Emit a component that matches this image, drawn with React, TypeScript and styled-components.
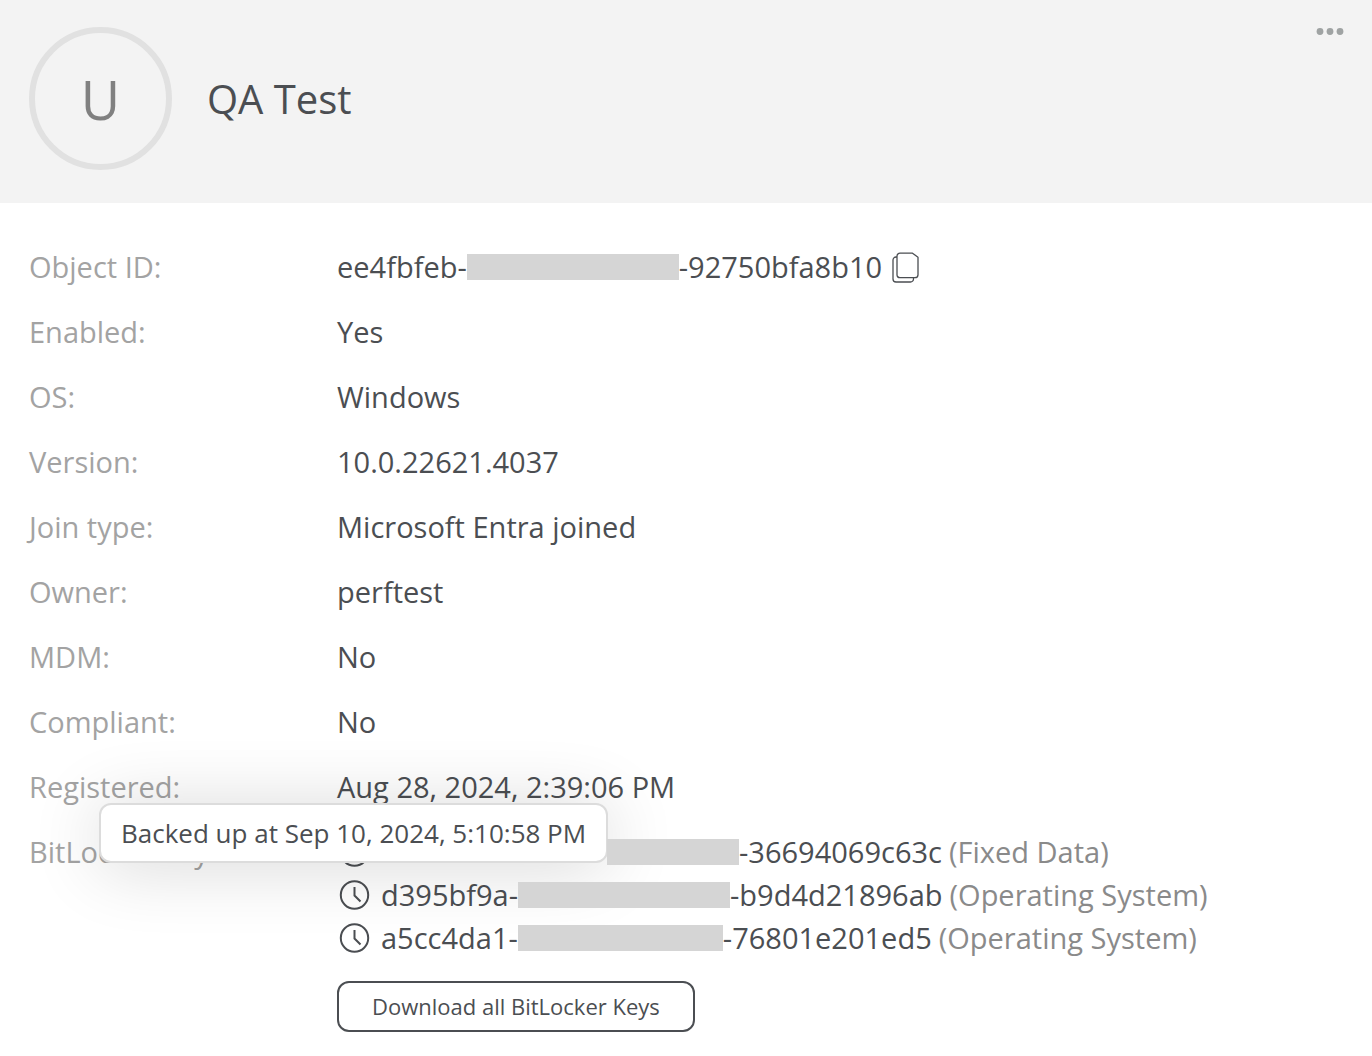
import React from "react";
import styled, { createGlobalStyle } from "styled-components";

const ink = "#4b4e52";
const muted = "#a3a3a3";

const GlobalStyle = createGlobalStyle`
  *, *::before, *::after { box-sizing: border-box; }
  body {
    margin: 0;
    background: #fff;
    color: ${ink};
    font-family: "Open Sans", "Noto Sans", sans-serif;
    font-size: 29px;
    line-height: 38px;
  }
`;

const Header = styled.header`
  display: flex;
  align-items: flex-start;
  gap: 35px;
  padding: 27px 24px 33px 29px;
  background: #f3f3f3;
`;

const Avatar = styled.div`
  display: flex;
  flex: none;
  align-items: center;
  justify-content: center;
  width: 143px;
  height: 143px;
  border: 6px solid #e1e1e1;
  border-radius: 50%;
  color: #808080;
  font-size: 54px;
  line-height: 74px;
`;

const Title = styled.h1`
  flex: 1;
  align-self: center;
  margin: 0;
  font-size: 40px;
  font-weight: 400;
  line-height: 53px;
`;

const IconButton = styled.button`
  display: inline-flex;
  flex: none;
  margin: 0;
  padding: 0;
  border: 0;
  background: none;
  color: inherit;
  cursor: pointer;
`;

const MenuButton = styled(IconButton)`
  color: #9fa3a3;
`;

const Details = styled.dl`
  display: grid;
  grid-template-columns: 308px minmax(0, 1fr);
  row-gap: 27px;
  margin: 0;
  padding: 45px 29px 24px;
`;

const Label = styled.dt`
  color: ${muted};
`;

const Value = styled.dd`
  display: flex;
  align-items: center;
  margin: 0;
  white-space: nowrap;
`;

const Redacted = styled.span<{ $width: number }>`
  position: relative;
  z-index: 2;
  flex: none;
  width: ${(p) => p.$width}px;
  height: 26px;
  background: #d5d5d5;
`;

const CopyButton = styled(IconButton)`
  margin-left: 9px;
`;

const KeyCell = styled.dd`
  position: relative;
  margin: 0;
`;

const KeyList = styled.ul`
  display: flex;
  flex-direction: column;
  gap: 5px;
  margin: 0;
  padding: 0;
  list-style: none;
`;

const KeyRow = styled.li`
  display: flex;
  align-items: center;
  white-space: nowrap;
`;

const KeyPrefix = styled.span<{ $width?: number }>`
  margin-left: 9px;
  width: ${(p) => (p.$width ? `${p.$width}px` : "auto")};
`;

const Volume = styled.span`
  margin-left: 7px;
  color: #8a8a8a;
`;

const Tooltip = styled.div`
  position: absolute;
  z-index: 1;
  top: -30px;
  left: -238px;
  padding: 9px 20px;
  border: 2px solid #dcdcdc;
  border-radius: 12px;
  background: #fff;
  box-shadow: 0 4px 70px rgba(0, 0, 0, 0.16);
  font-size: 26px;
  line-height: 38px;
  white-space: nowrap;
`;

const DownloadButton = styled.button`
  margin: 24px 0 0;
  padding: 8px 33px;
  border: 2px solid ${ink};
  border-radius: 12px;
  background: #fff;
  color: ${ink};
  font: inherit;
  font-size: 22px;
  line-height: 31px;
  cursor: pointer;
`;

const MoreIcon = () => (
  <svg width="36" height="10" viewBox="0 0 36 10" fill="currentColor" aria-hidden="true">
    <circle cx="8" cy="4.5" r="3.4" />
    <circle cx="18" cy="4.5" r="3.4" />
    <circle cx="28" cy="4.5" r="3.4" />
  </svg>
);

const CopyIcon = () => (
  <svg
    width="30"
    height="32"
    viewBox="0 0 30 32"
    fill="none"
    stroke="currentColor"
    strokeWidth="1.3"
    strokeLinejoin="round"
    aria-hidden="true"
  >
    <path d="M9 2.200h12.500l5.500 4v17.500a3 3 0 0 1-3 3H9a3 3 0 0 1-3-3V5.200a3 3 0 0 1 3-3Z" />
    <path d="M6 6h-1a3 3 0 0 0-3 3v19a3 3 0 0 0 3 3h14.500a3 3 0 0 0 3-3v-1.300" />
  </svg>
);

const ClockIcon = () => (
  <svg
    width="35"
    height="32"
    viewBox="0 0 35 32"
    fill="none"
    stroke="currentColor"
    strokeWidth="2"
    aria-hidden="true"
  >
    <circle cx="17.500" cy="16" r="13.700" />
    <path d="M17.500 8v8.500l6 6" />
  </svg>
);

const Row = ({ label, children }: { label: string; children: React.ReactNode }) => (
  <>
    <Label>{label}</Label>
    <Value>{children}</Value>
  </>
);

const keys = [
  { prefix: "", prefixWidth: 226, hidden: 132, suffix: "-36694069c63c", volume: "(Fixed Data)" },
  { prefix: "d395bf9a-", hidden: 212, suffix: "-b9d4d21896ab", volume: "(Operating System)" },
  { prefix: "a5cc4da1-", hidden: 205, suffix: "-76801e201ed5", volume: "(Operating System)" },
];

export default function App() {
  return (
    <>
      <GlobalStyle />
      <Header>
        <Avatar>U</Avatar>
        <Title>QA Test</Title>
        <MenuButton type="button" aria-label="More actions">
          <MoreIcon />
        </MenuButton>
      </Header>
      <main>
        <Details>
          <Row label="Object ID:">
            ee4fbfeb-
            <Redacted $width={212} />
            -92750bfa8b10
            <CopyButton type="button" aria-label="Copy object ID">
              <CopyIcon />
            </CopyButton>
          </Row>
          <Row label="Enabled:">Yes</Row>
          <Row label="OS:">Windows</Row>
          <Row label="Version:">10.0.22621.4037</Row>
          <Row label="Join type:">Microsoft Entra joined</Row>
          <Row label="Owner:">perftest</Row>
          <Row label="MDM:">No</Row>
          <Row label="Compliant:">No</Row>
          <Row label="Registered:">Aug 28, 2024, 2:39:06 PM</Row>
          <Label>BitLocker keys:</Label>
          <KeyCell>
            <KeyList>
              {keys.map((k) => (
                <KeyRow key={k.suffix}>
                  <ClockIcon />
                  <KeyPrefix $width={k.prefixWidth}>{k.prefix}</KeyPrefix>
                  <Redacted $width={k.hidden} />
                  {k.suffix}
                  <Volume>{k.volume}</Volume>
                </KeyRow>
              ))}
            </KeyList>
            <Tooltip role="tooltip">Backed up at Sep 10, 2024, 5:10:58 PM</Tooltip>
            <DownloadButton type="button">Download all BitLocker Keys</DownloadButton>
          </KeyCell>
        </Details>
      </main>
    </>
  );
}
